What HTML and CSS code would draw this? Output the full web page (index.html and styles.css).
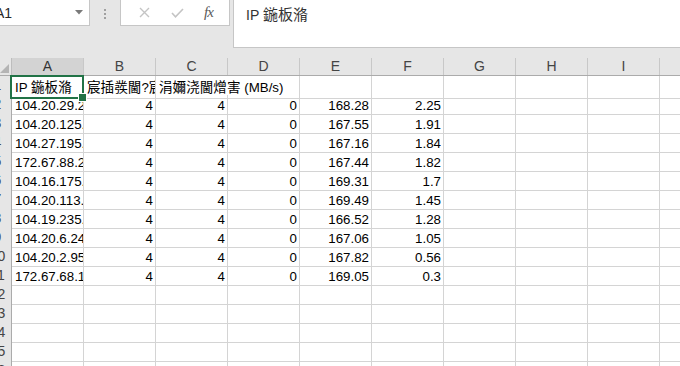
FILE: index.html
```html
<!DOCTYPE html>
<html lang="zh-CN">
<head>
  <meta charset="UTF-8">
  <title>Book1 - Excel</title>
  <link rel="stylesheet" href="styles.css">
</head>
<body>
  <div class="formula-bar">
    <div class="name-box">
      <span class="name">A1</span>
      <svg class="caret" width="8" height="5" viewBox="0 0 8 5"><path d="M0 0h8L4 4.5z" fill="#7a7a7a"/></svg>
    </div>
    <div class="grip"><i></i><i></i><i></i></div>
    <div class="fx-buttons">
      <svg width="11" height="11" viewBox="0 0 11 11"><path d="M1 1l9 9M10 1l-9 9" stroke="#c4c4c4" stroke-width="1.4"/></svg>
      <svg width="13" height="10" viewBox="0 0 13 10"><path d="M1 5l3.5 3.8L12 1" fill="none" stroke="#c4c4c4" stroke-width="1.6"/></svg>
      <span class="fx">fx</span>
    </div>
    <div class="formula-input">IP <span class="cjk">鍦板潃</span></div>
  </div>

  <div class="sheet">
    <div class="row heads">
      <div class="corner"></div>
      <div class="ch sel">A</div><div class="ch">B</div><div class="ch">C</div>
      <div class="ch">D</div><div class="ch">E</div><div class="ch">F</div>
      <div class="ch">G</div><div class="ch">H</div><div class="ch">I</div>
      <div class="ch"></div>
    </div>

    <div class="row">
      <div class="rh">1</div>
      <div class="c active">IP <span class="cjk">鍦板潃</span></div>
      <div class="c"><span class="cjk">宸插彂閫</span>?<span class="cjk">宸叉帴鏀</span></div>
      <div class="c spill"><span class="cjk">涓嬭浇閫熷害</span> (MB/s)</div>
      <div class="c"></div><div class="c"></div><div class="c"></div><div class="c"></div><div class="c"></div><div class="c"></div><div class="c"></div>
    </div>
    <div class="row">
      <div class="rh">2</div><div class="c">104.20.29.21</div><div class="c n">4</div><div class="c n">4</div><div class="c n">0</div><div class="c n">168.28</div><div class="c n">2.25</div><div class="c"></div><div class="c"></div><div class="c"></div><div class="c"></div>
    </div>
    <div class="row">
      <div class="rh">3</div><div class="c">104.20.125.19</div><div class="c n">4</div><div class="c n">4</div><div class="c n">0</div><div class="c n">167.55</div><div class="c n">1.91</div><div class="c"></div><div class="c"></div><div class="c"></div><div class="c"></div>
    </div>
    <div class="row">
      <div class="rh">4</div><div class="c">104.27.195.88</div><div class="c n">4</div><div class="c n">4</div><div class="c n">0</div><div class="c n">167.16</div><div class="c n">1.84</div><div class="c"></div><div class="c"></div><div class="c"></div><div class="c"></div>
    </div>
    <div class="row">
      <div class="rh">5</div><div class="c">172.67.88.21</div><div class="c n">4</div><div class="c n">4</div><div class="c n">0</div><div class="c n">167.44</div><div class="c n">1.82</div><div class="c"></div><div class="c"></div><div class="c"></div><div class="c"></div>
    </div>
    <div class="row">
      <div class="rh">6</div><div class="c">104.16.175.5</div><div class="c n">4</div><div class="c n">4</div><div class="c n">0</div><div class="c n">169.31</div><div class="c n">1.7</div><div class="c"></div><div class="c"></div><div class="c"></div><div class="c"></div>
    </div>
    <div class="row">
      <div class="rh">7</div><div class="c">104.20.113.4</div><div class="c n">4</div><div class="c n">4</div><div class="c n">0</div><div class="c n">169.49</div><div class="c n">1.45</div><div class="c"></div><div class="c"></div><div class="c"></div><div class="c"></div>
    </div>
    <div class="row">
      <div class="rh">8</div><div class="c">104.19.235.7</div><div class="c n">4</div><div class="c n">4</div><div class="c n">0</div><div class="c n">166.52</div><div class="c n">1.28</div><div class="c"></div><div class="c"></div><div class="c"></div><div class="c"></div>
    </div>
    <div class="row">
      <div class="rh">9</div><div class="c">104.20.6.243</div><div class="c n">4</div><div class="c n">4</div><div class="c n">0</div><div class="c n">167.06</div><div class="c n">1.05</div><div class="c"></div><div class="c"></div><div class="c"></div><div class="c"></div>
    </div>
    <div class="row">
      <div class="rh">10</div><div class="c">104.20.2.95</div><div class="c n">4</div><div class="c n">4</div><div class="c n">0</div><div class="c n">167.82</div><div class="c n">0.56</div><div class="c"></div><div class="c"></div><div class="c"></div><div class="c"></div>
    </div>
    <div class="row">
      <div class="rh">11</div><div class="c">172.67.68.13</div><div class="c n">4</div><div class="c n">4</div><div class="c n">0</div><div class="c n">169.05</div><div class="c n">0.3</div><div class="c"></div><div class="c"></div><div class="c"></div><div class="c"></div>
    </div>
    <div class="row">
      <div class="rh">12</div><div class="c"></div><div class="c"></div><div class="c"></div><div class="c"></div><div class="c"></div><div class="c"></div><div class="c"></div><div class="c"></div><div class="c"></div><div class="c"></div>
    </div>
    <div class="row">
      <div class="rh">13</div><div class="c"></div><div class="c"></div><div class="c"></div><div class="c"></div><div class="c"></div><div class="c"></div><div class="c"></div><div class="c"></div><div class="c"></div><div class="c"></div>
    </div>
    <div class="row">
      <div class="rh">14</div><div class="c"></div><div class="c"></div><div class="c"></div><div class="c"></div><div class="c"></div><div class="c"></div><div class="c"></div><div class="c"></div><div class="c"></div><div class="c"></div>
    </div>
    <div class="row">
      <div class="rh">15</div><div class="c"></div><div class="c"></div><div class="c"></div><div class="c"></div><div class="c"></div><div class="c"></div><div class="c"></div><div class="c"></div><div class="c"></div><div class="c"></div>
    </div>
    <div class="row">
      <div class="rh">16</div><div class="c"></div><div class="c"></div><div class="c"></div><div class="c"></div><div class="c"></div><div class="c"></div><div class="c"></div><div class="c"></div><div class="c"></div><div class="c"></div>
    </div>
  </div>
</body>
</html>
```

FILE: styles.css
```css
* {
  box-sizing: border-box;
}
html, body {
  margin: 0;
  height: 100%;
  overflow: hidden;
}
body {
  background-color: #e6e6e6;
  font-family: "Liberation Sans", Arial, "Noto Sans CJK SC", sans-serif;
  color: #000;
}
.cjk {
  font-family: "Noto Sans CJK SC", sans-serif;
  font-size: 13.6px;
}

/* formula bar */
.formula-bar {
  display: flex;
  align-items: flex-start;
  height: 47px;
}
.name-box {
  width: 90px;
  height: 26px;
  background-color: #fff;
  border: 1px solid #c6c6c6;
  border-left: none;
  border-top: none;
  display: flex;
  align-items: center;
  justify-content: space-between;
  padding-right: 6px;
  overflow: hidden;
}
.name {
  font-size: 14px;
  color: #262626;
  margin-left: -5px;
}
.grip {
  width: 30px;
  display: flex;
  flex-direction: column;
  align-items: center;
  gap: 2px;
  padding-top: 9px;
}
.grip i {
  width: 2px;
  height: 2px;
  background-color: #a0a0a0;
}
.fx-buttons {
  width: 110px;
  height: 26px;
  background-color: #fff;
  border: 1px solid #c6c6c6;
  border-top: none;
  display: flex;
  align-items: center;
  justify-content: space-around;
  padding: 0 6px 0 8px;
}
.fx {
  font-family: "Liberation Serif", serif;
  font-style: italic;
  font-size: 15px;
  color: #5a5a5a;
  letter-spacing: -1px;
}
.formula-input {
  flex: 1;
  height: 48px;
  margin-left: 3px;
  background-color: #fff;
  border: 1px solid #c6c6c6;
  border-top: none;
  border-right: none;
  padding: 3px 0 0 12px;
  font-size: 14px;
  color: #333;
}
.formula-input .cjk {
  font-size: 15px;
}

/* sheet grid */
.sheet {
  margin-top: 11px;
  margin-left: -16px;
}
.row {
  display: grid;
  grid-template-columns: 28px repeat(9, 72px) 80px;
  height: 19px;
  background-color: #fff;
}
.heads {
  height: 18px;
  background-color: #e6e6e6;
  border-bottom: 1px solid #ababab;
}
.corner {
  position: relative;
  border-right: 1px solid #bdbdbd;
}
.corner::after {
  content: "";
  position: absolute;
  right: 2px;
  bottom: 2px;
  border-left: 9px solid transparent;
  border-bottom: 9px solid #b4b4b4;
}
.ch {
  border-right: 1px solid #c8c8c8;
  text-align: center;
  font-size: 14px;
  line-height: 17px;
  color: #444;
}
.ch.sel {
  background-color: #d3d3d3;
  color: #333;
}
.rh {
  background-color: #e6e6e6;
  border-right: 1px solid #ababab;
  border-bottom: 1px solid #c8c8c8;
  text-align: center;
  font-size: 14px;
  line-height: 19px;
  color: #444;
}
.c {
  border-right: 1px solid #d4d4d4;
  border-bottom: 1px solid #d4d4d4;
  font-size: 13.3px;
  line-height: 21px;
  padding: 0 2px 0 3px;
  white-space: nowrap;
  overflow: hidden;
}
.c.n {
  text-align: right;
}
.c.spill {
  overflow: visible;
  border-right-color: transparent;
}
.c.active {
  position: relative;
  z-index: 1;
  overflow: visible;
}
.c.active::before {
  content: "";
  position: absolute;
  left: -2px;
  top: -1px;
  right: -1px;
  bottom: -1px;
  border: 2px solid #217346;
}
.c.active::after {
  content: "";
  position: absolute;
  right: -4px;
  bottom: -4px;
  width: 7px;
  height: 7px;
  background-color: #217346;
  border: 1px solid #fff;
}
```
